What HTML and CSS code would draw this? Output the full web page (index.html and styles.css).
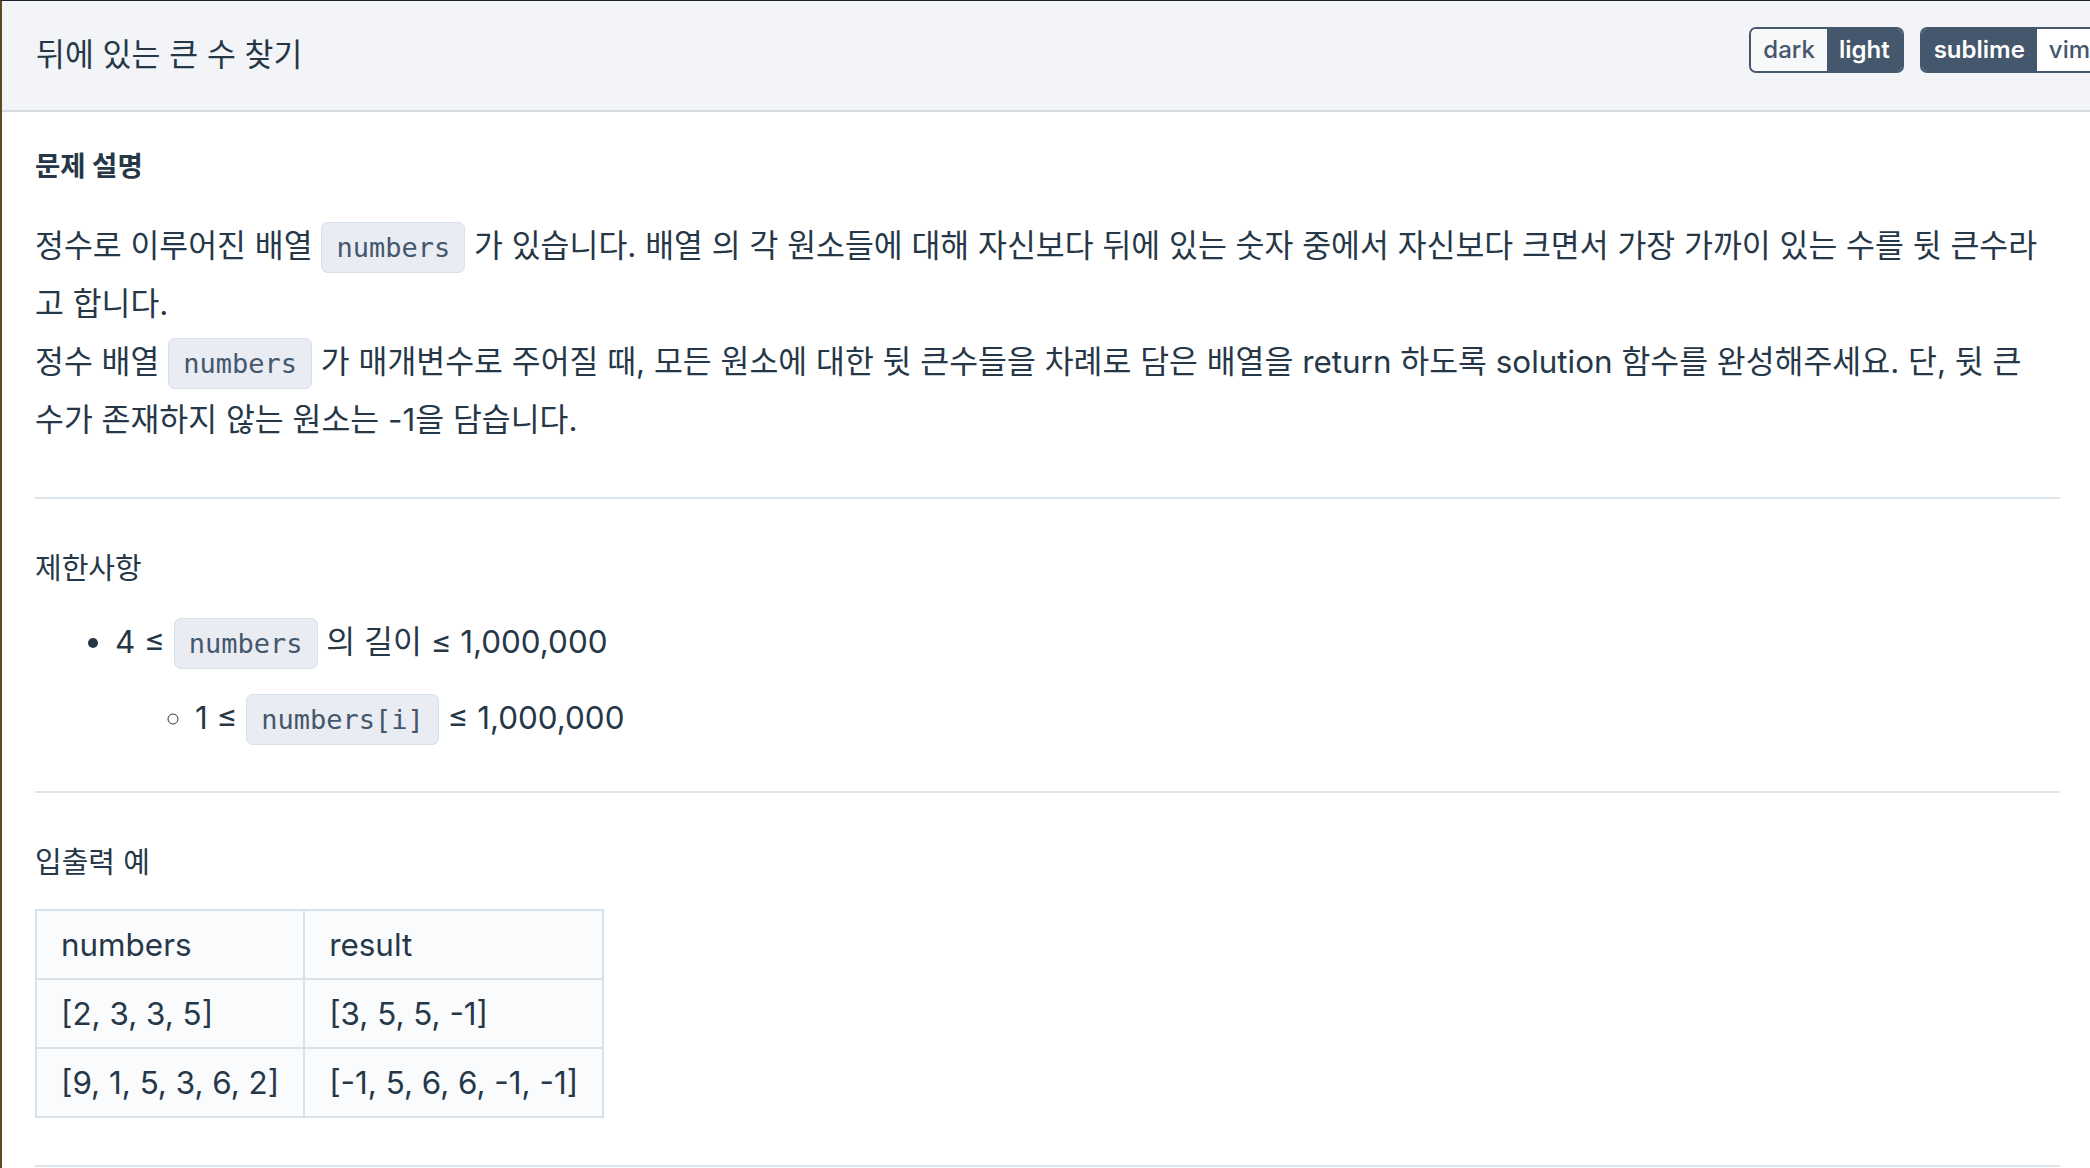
FILE: index.html
```html
<!DOCTYPE html>
<html lang="ko">
<head>
<meta charset="utf-8">
<title>뒤에 있는 큰 수 찾기</title>
<link rel="stylesheet" href="styles.css">
</head>
<body>
<div class="frame">
  <header class="topbar">
    <h1 class="title">뒤에 있는 큰 수 찾기</h1>
    <div class="toggles">
      <div class="seg">
        <span class="seg-btn">dark</span>
        <span class="seg-btn active">light</span>
      </div>
      <div class="seg">
        <span class="seg-btn active">sublime</span>
        <span class="seg-btn plain">vim</span>
      </div>
    </div>
  </header>
  <main class="content">
    <h5 class="sec-title">문제 설명</h5>
    <p class="desc">정수로 이루어진 배열 <code>numbers</code> 가 있습니다. 배열 의 각 원소들에 대해 자신보다 뒤에 있는 숫자 중에서 자신보다 크면서 가장 가까이 있는 수를 뒷 큰수라고 합니다.<br>정수 배열 <code>numbers</code> 가 매개변수로 주어질 때, 모든 원소에 대한 뒷 큰수들을 차례로 담은 배열을 return 하도록 solution 함수를 완성해주세요. 단, 뒷 큰수가 존재하지 않는 원소는 -1을 담습니다.</p>
    <hr class="rule">
    <h5 class="sub-title">제한사항</h5>
    <ul class="limits">
      <li>4 ≤ <code>numbers</code> 의 길이 ≤ 1,000,000
        <ul class="limits-sub">
          <li>1 ≤ <code>numbers[i]</code> ≤ 1,000,000</li>
        </ul>
      </li>
    </ul>
    <hr class="rule">
    <h5 class="sub-title">입출력 예</h5>
    <table class="examples">
      <thead>
        <tr><th>numbers</th><th>result</th></tr>
      </thead>
      <tbody>
        <tr><td>[2, 3, 3, 5]</td><td>[3, 5, 5, -1]</td></tr>
        <tr><td>[9, 1, 5, 3, 6, 2]</td><td>[-1, 5, 6, 6, -1, -1]</td></tr>
      </tbody>
    </table>
    <hr class="rule last">
  </main>
</div>
</body>
</html>
```
FILE: styles.css
```css
html, body {
  margin: 0;
  padding: 0;
  background: #ffffff;
  overflow: hidden;
}

body {
  font-family: Inter, "Noto Sans CJK KR", sans-serif;
  color: #263747;
}

.frame {
  min-height: 1168px;
  border-top: 1px solid #1b2230;
  border-left: 2px solid #5c4a1f;
  box-sizing: border-box;
}

.topbar {
  height: 111px;
  box-sizing: border-box;
  background: #f2f4f7;
  border-bottom: 2px solid #d5dbe2;
  display: flex;
  align-items: center;
  justify-content: space-between;
  padding-left: 34px;
  margin-right: -40px;
}

.title {
  margin: 0;
  font-size: 31.4px;
  font-weight: 400;
  color: #263747;
  line-height: 1.4;
}

.toggles {
  display: flex;
  gap: 16px;
  margin-top: -12px;
  margin-right: 8px;
}

.seg {
  display: flex;
  border: 2px solid #44576c;
  border-radius: 7px;
  overflow: hidden;
  height: 46px;
  box-sizing: border-box;
}

.seg-btn {
  display: flex;
  align-items: center;
  padding: 0 12px;
  font-size: 24px;
  font-weight: 500;
  color: #44576c;
  background: #f7f8fa;
}

.seg-btn.active {
  background: #44576c;
  color: #ffffff;
  font-weight: 600;
}

.seg-btn.plain {
  background: #ffffff;
  padding-right: 30px;
}

.content {
  padding: 0 30px 0 33px;
}

.sec-title {
  margin: 34px 0 0;
  font-size: 27.5px;
  font-weight: 700;
  line-height: 40px;
}

.desc {
  margin: 31px 0 0;
  padding-right: 16px;
  font-size: 31.4px;
  line-height: 58px;
}

code {
  font-family: "DejaVu Sans Mono", monospace;
  font-size: 27px;
  line-height: 1;
  color: #44576c;
  background: #e9ecf3;
  border: 1px solid #d7e2eb;
  border-radius: 7px;
  padding: 9px 14px;
}

.rule {
  border: 0;
  height: 2px;
  background: #dde5ec;
  margin: 48px 0 0;
}

.sub-title {
  margin: 50px 0 0;
  font-size: 29px;
  font-weight: 400;
  line-height: 40px;
}

.limits {
  margin: 24px 0 0;
  padding-left: 80px;
  font-size: 31.4px;
  line-height: 58px;
  list-style: disc;
}

.limits-sub {
  margin: 18px 0 0;
  padding-left: 80px;
  list-style: circle;
}

.limits + .rule {
  margin-top: 44px;
}

.examples {
  margin-top: 26px;
  border-collapse: collapse;
  background: #fafbfd;
  font-size: 31.4px;
}

.examples th,
.examples td {
  border: 2px solid #d7e2eb;
  height: 67px;
  padding: 0 24px;
  text-align: left;
  font-weight: 400;
  white-space: nowrap;
}

.examples th:first-child,
.examples td:first-child {
  width: 217px;
}

.examples th:last-child,
.examples td:last-child {
  width: 249px;
}

.rule.last {
  margin-top: 47px;
}
```
